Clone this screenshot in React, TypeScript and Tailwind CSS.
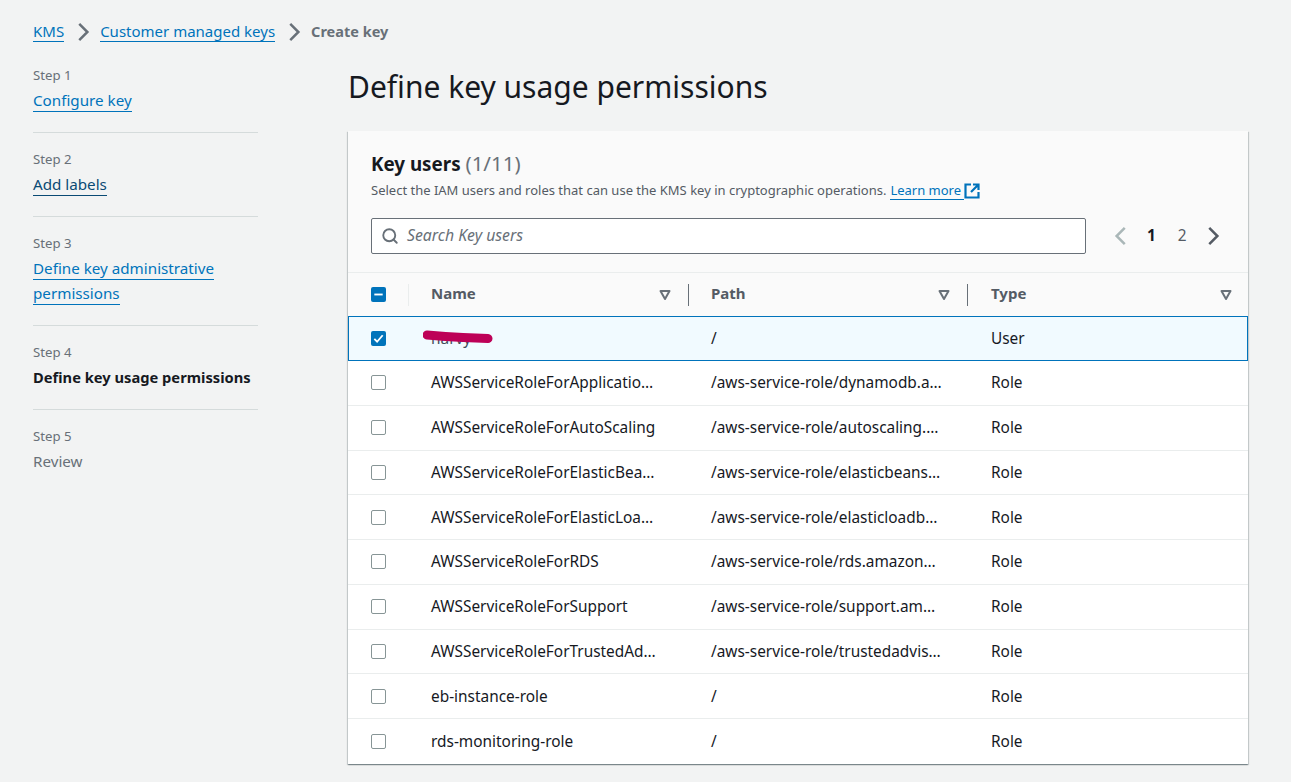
import React from 'react';
import { Search } from 'lucide-react';

const steps = [
  { label: 'Step 1', title: 'Configure key', kind: 'link' },
  { label: 'Step 2', title: 'Add labels', kind: 'hover' },
  { label: 'Step 3', title: 'Define key administrative permissions', kind: 'link' },
  { label: 'Step 4', title: 'Define key usage permissions', kind: 'active' },
  { label: 'Step 5', title: 'Review', kind: 'disabled' },
];

const rows = [
  { name: 'AWSServiceRoleForApplicatio…', path: '/aws-service-role/dynamodb.a…', type: 'Role' },
  { name: 'AWSServiceRoleForAutoScaling', path: '/aws-service-role/autoscaling.…', type: 'Role' },
  { name: 'AWSServiceRoleForElasticBea…', path: '/aws-service-role/elasticbeans…', type: 'Role' },
  { name: 'AWSServiceRoleForElasticLoa…', path: '/aws-service-role/elasticloadb…', type: 'Role' },
  { name: 'AWSServiceRoleForRDS', path: '/aws-service-role/rds.amazon…', type: 'Role' },
  { name: 'AWSServiceRoleForSupport', path: '/aws-service-role/support.am…', type: 'Role' },
  { name: 'AWSServiceRoleForTrustedAd…', path: '/aws-service-role/trustedadvis…', type: 'Role' },
  { name: 'eb-instance-role', path: '/', type: 'Role' },
  { name: 'rds-monitoring-role', path: '/', type: 'Role' },
];

function Chevron({ left, className }: { left?: boolean; className: string }) {
  return (
    <svg viewBox="0 0 16 16" className={className} fill="none" stroke="currentColor" strokeWidth="2">
      <path d={left ? 'M11 1.5 4.5 8l6.5 6.5' : 'M5 1.5 11.5 8 5 14.5'} />
    </svg>
  );
}

function Caret() {
  return (
    <svg viewBox="0 0 12 12" className="h-3 w-3 text-[#687078]" fill="none" stroke="currentColor" strokeWidth="2">
      <path d="M1.5 2h9L6 10z" strokeLinejoin="round" />
    </svg>
  );
}

function Checkbox({ state }: { state?: 'checked' | 'mixed' }) {
  if (!state) {
    return <span className="block h-[15px] w-[15px] rounded-[2px] border border-[#879596] bg-white" />;
  }
  return (
    <span className="flex h-[15px] w-[15px] items-center justify-center rounded-[2px] bg-[#0073bb]">
      <svg viewBox="0 0 14 14" className="h-[13px] w-[13px]" fill="none" stroke="white" strokeWidth="2">
        <path d={state === 'checked' ? 'M2.5 7.5 5.5 10.5 11.5 3.5' : 'M2.5 7h9'} />
      </svg>
    </span>
  );
}

function HeaderCell({ title, divider }: { title: string; divider?: boolean }) {
  return (
    <div className={`flex h-[22px] w-full items-center justify-between ${divider ? 'border-r border-[#687078]' : ''}`}>
      <span className="-mt-[2px] text-[15px] font-bold text-[#545b64]">{title}</span>
      <span className={divider ? 'mr-[17px]' : 'mr-[16px]'}>
        <Caret />
      </span>
    </div>
  );
}

export default function App() {
  return (
    <div
      className="min-h-[782px] overflow-hidden bg-[#f2f3f3] pl-[33px] pr-[42px] pt-[21px] text-[15.4px] text-[#16191f]"
      style={{ fontFamily: '"Noto Sans", sans-serif' }}
    >
      {/* Breadcrumbs */}
      <div className="flex h-[21px] items-center text-[15px] leading-[21px]">
        <a className="border-b border-[#0073bb] leading-[20px] text-[#0073bb]">KMS</a>
        <Chevron className="ml-[9px] mr-[7px] h-[20px] w-[20px] text-[#687078]" />
        <a className="border-b border-[#0073bb] leading-[20px] text-[#0073bb]">Customer managed keys</a>
        <Chevron className="ml-[9px] mr-[7px] h-[20px] w-[20px] text-[#687078]" />
        <span className="text-[14.5px] font-bold text-[#687078]">Create key</span>
      </div>

      <div className="flex">
        {/* Wizard steps */}
        <div className="mt-[23px] w-[225px] shrink-0">
          {steps.map((step, i) => (
            <div key={step.label} className={i < 4 ? 'mb-[16px] border-b border-[#d5dbdb] pb-[19px]' : ''}>
              <div className="text-[13.2px] leading-[21px] text-[#687078]">{step.label}</div>
              <div className="mt-[2px] text-[15.2px] leading-[25px]">
                {step.kind === 'link' && (
                  <a className="border-b border-[#0073bb] pb-px text-[#0073bb]">{step.title}</a>
                )}
                {step.kind === 'hover' && (
                  <a className="border-b border-[#0a4a74] pb-px text-[#0a4a74]">{step.title}</a>
                )}
                {step.kind === 'active' && (
                  <span className="inline-block whitespace-nowrap text-[14.7px] font-bold">{step.title}</span>
                )}
                {step.kind === 'disabled' && <span className="text-[#687078]">{step.title}</span>}
              </div>
            </div>
          ))}
        </div>

        {/* Main */}
        <div className="ml-[90px] w-[900px] shrink-0">
          <h1 className="mt-[26px] text-[30px] leading-[38px] text-[#16191f]">Define key usage permissions</h1>
          <div className="mt-[25px] bg-white shadow-[0_1px_1px_0_rgba(0,28,36,0.3),1px_1px_1px_0_rgba(0,28,36,0.15),-1px_1px_1px_0_rgba(0,28,36,0.15)]">
            <div className="h-[142px] border-b border-[#eaeded] bg-[#fafafa] px-[23px] pt-[19px]">
              <div className="text-[18.8px] font-bold leading-[26px]">
                Key users <span className="text-[20.5px] font-normal text-[#687078]">(1/11)</span>
              </div>
              <div className="mt-[4px] flex items-center text-[13px] leading-[19px] text-[#545b64]">
                <span>Select the IAM users and roles that can use the KMS key in cryptographic operations.</span>
                <a className="ml-[4px] border-b border-[#0073bb] leading-[18px] text-[#0073bb]">Learn more&nbsp;</a>
                <svg viewBox="0 0 16 16" className="h-[16px] w-[16px] text-[#0073bb]" fill="none" stroke="currentColor" strokeWidth="2.2">
                  <path d="M7 1.5H1.5v13h13V9M9 1.5h5.5V7M14.5 1.5 7 9" />
                </svg>
              </div>
              <div className="mt-[18px] flex items-center">
                <div className="flex h-[36px] w-[715px] items-center gap-[8px] rounded-[2px] border border-[#687078] bg-white pl-[9px]">
                  <Search className="h-[18px] w-[18px] text-[#687078]" strokeWidth={2.5} />
                  <span className="text-[15.8px] italic text-[#687078]">Search Key users</span>
                </div>
                <div className="ml-[25px] flex items-center">
                  <Chevron left className="h-[20px] w-[20px] text-[#aab7b8]" />
                  <span className="ml-[16px] font-bold">1</span>
                  <span className="ml-[22px] text-[#545b64]">2</span>
                  <Chevron className="ml-[16px] h-[20px] w-[20px] text-[#545b64]" />
                </div>
              </div>
            </div>

            <div className="flex h-[43px] items-center bg-[#fafafa]">
              <div className="flex h-[22px] w-[61px] items-center border-r border-[#eaeded] pl-[23px]">
                <Checkbox state="mixed" />
              </div>
              <div className="w-[280px] pl-[22px]">
                <HeaderCell title="Name" divider />
              </div>
              <div className="w-[279px] pl-[22px]">
                <HeaderCell title="Path" divider />
              </div>
              <div className="flex-1 pl-[23px]">
                <HeaderCell title="Type" />
              </div>
            </div>

            {/* Selected row */}
            <div className="flex h-[45px] items-center border border-[#0073bb] bg-[#f1faff]">
              <div className="w-[59px] pl-[22px]">
                <Checkbox state="checked" />
              </div>
              <div className="relative w-[281px] pl-[23px]">
                <span className="text-[#414d5c]">harvy</span>
                <svg viewBox="0 0 70 16" className="absolute left-[15px] top-[2px] h-[16px] w-[70px]" fill="none" stroke="#bd0057" strokeWidth="9" strokeLinecap="round">
                  <path d="M4 6C14 7 26 8 40 8.5L65 9.5" />
                </svg>
              </div>
              <div className="w-[279px] pl-[22px]">/</div>
              <div className="pl-[23px]">User</div>
            </div>

            {rows.map((row) => (
              <div key={row.name} className="flex h-[44.75px] items-center whitespace-nowrap border-b border-[#eaeded] last:border-b-0">
                <div className="w-[60px] pl-[23px]">
                  <Checkbox />
                </div>
                <div className="w-[281px] pl-[23px]">{row.name}</div>
                <div className="w-[279px] pl-[22px]">{row.path}</div>
                <div className="pl-[23px]">{row.type}</div>
              </div>
            ))}
          </div>
        </div>
      </div>
    </div>
  );
}
